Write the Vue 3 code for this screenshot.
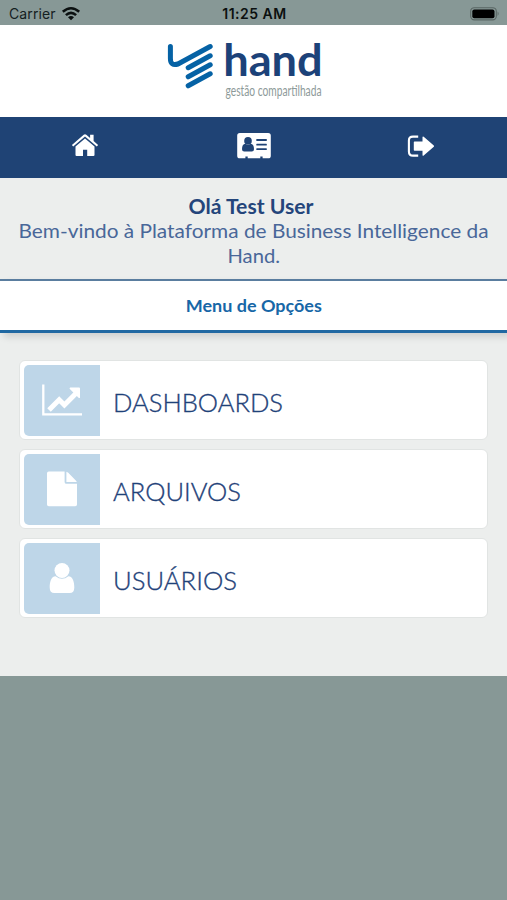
<script setup>
const user = 'Test User'

const options = [
  { id: 'dashboards', label: 'DASHBOARDS', width: 170 },
  { id: 'arquivos', label: 'ARQUIVOS', width: 128 },
  { id: 'usuarios', label: 'USUÁRIOS', width: 124 },
]
</script>

<template>
  <div class="screen">
    <!-- status bar -->
    <div class="status">
      <div class="carrier">
        <span>Carrier</span>
        <svg width="18" height="14" viewBox="0 0 18 14" fill="none" stroke="#0b1010" stroke-width="2.6">
          <path d="M.8 4.7Q9 -2.2 17.2 4.7" />
          <path d="M3.9 8.1Q9 3.5 14.1 8.1" />
          <path d="M9 13.2L6 10.2Q9 7.6 12 10.2Z" fill="#0b1010" stroke="none" />
        </svg>
      </div>
      <div class="clock">11:25 AM</div>
      <div class="battery">
        <svg width="30" height="14" viewBox="0 0 30 14">
          <rect x=".7" y=".7" width="25.6" height="12.2" rx="3.6" fill="none" stroke="#5a6664" stroke-width="1.1" />
          <rect x="2.3" y="2.5" width="22.2" height="8.8" rx="2" fill="#000" />
          <path d="M27.6 4.6Q29.6 6.8 27.6 9Z" fill="#5a6664" />
        </svg>
      </div>
    </div>

    <!-- logo -->
    <header class="header">
      <svg width="160" height="64" viewBox="0 0 160 64">
        <g fill="none" stroke="#0562a5" stroke-width="5" stroke-linecap="round" stroke-linejoin="round">
          <path d="M5.4 8.5V20.5Q5.4 28.4 13 26L45.2 8.5" />
          <path d="M23.2 29.7L45.2 17.8" />
          <path d="M23.2 38.8L45.2 26.8" />
          <path d="M23.2 47.8L45.2 35.8" />
        </g>
        <text class="brand" x="58.2" y="37.5" textLength="99.5" lengthAdjust="spacingAndGlyphs">hand</text>
        <text class="tagline" x="60.5" y="57.6" textLength="96" lengthAdjust="spacingAndGlyphs">gestão compartilhada</text>
      </svg>
    </header>

    <nav class="nav">
      <a class="nav-item">
        <svg width="28" height="26" viewBox="0 0 28 26" fill="#fff">
          <path d="M4.5 13.4L14 5.6L23.5 13.4V22Q23.5 23.1 22.4 23.1H16.2V16.8H12V23.1H5.6Q4.5 23.1 4.5 22Z" />
          <path d="M.9 11.9L12.7 1.7Q14 .7 15.3 1.7L19.1 4.9V1.7H22.6V7.9L27.1 11.9L25.8 13.4L14 3.5L2.2 13.4Z" />
        </svg>
      </a>
      <a class="nav-item">
        <svg width="34" height="28" viewBox="0 0 34 28">
          <path fill="#fff" d="M2.8 1H31.2Q33.8 1 33.8 3.6V23.7Q33.8 26.3 31.2 26.3H25.6V24.5H23.3V26.3H10.7V24.5H8.4V26.3H2.8Q.2 26.3 .2 23.7V3.6Q.2 1 2.8 1Z" />
          <g fill="#1f4375">
            <circle cx="11" cy="8.9" r="3.8" />
            <path d="M5 17.2Q5 12.3 8.3 11.8Q11 14 13.7 11.8Q17 12.3 17 17.2Q17 19.6 14.8 19.6H7.2Q5 19.6 5 17.2Z" />
            <rect x="19.3" y="7.1" width="10.5" height="1.8" rx=".5" />
            <rect x="19.3" y="11.8" width="10.5" height="1.8" rx=".5" />
            <rect x="19.3" y="16.2" width="10.5" height="1.8" rx=".5" />
          </g>
        </svg>
      </a>
      <a class="nav-item">
        <svg width="31" height="24" viewBox="0 0 31 24">
          <path d="M11.2 2.6H6Q1.9 2.6 1.9 6.6V17.4Q1.9 21.6 6 21.6H11.2" fill="none" stroke="#fff" stroke-width="2.1" />
          <path d="M7.5 7.6H15.5V3.2Q15.6 1.9 16.7 2.7L26.8 11.4Q27.4 12.1 26.8 12.8L16.7 21.6Q15.6 22.4 15.5 21.1V16.8H7.5Q6.8 16.8 6.8 16.1V8.3Q6.8 7.6 7.5 7.6Z" fill="#fff" />
        </svg>
      </a>
    </nav>

    <section class="welcome">
      <svg width="507" height="101" viewBox="0 0 507 101">
        <text class="hello" x="188.5" y="35.7" textLength="125" lengthAdjust="spacingAndGlyphs">Olá {{ user }}</text>
        <text class="message" x="18.5" y="60.1" textLength="470" lengthAdjust="spacingAndGlyphs">Bem-vindo à Plataforma de Business Intelligence da</text>
        <text class="message" x="227.5" y="84.5" textLength="52.5" lengthAdjust="spacingAndGlyphs">Hand.</text>
      </svg>
    </section>

    <div class="menu-title">
      <svg width="140" height="26" viewBox="0 0 140 26">
        <text x="1.7" y="18.5" textLength="136.2" lengthAdjust="spacingAndGlyphs">Menu de Opções</text>
      </svg>
    </div>

    <main class="options">
      <a v-for="option in options" :key="option.id" class="option">
        <div class="option-icon">
          <svg v-if="option.id === 'dashboards'" width="40" height="32" viewBox="0 0 40 32">
            <path d="M1.3 .5V30.3H40" fill="none" stroke="#fff" stroke-width="2.3" />
            <path d="M7 26L17.2 15.8L22.4 21L34.6 8.8" fill="none" stroke="#fff" stroke-width="5" />
            <path d="M28.2 3.4H37Q38 3.4 38 4.4V13.4Q37.6 14.6 36.6 13.8L27.8 5Q27 3.9 28.2 3.4Z" fill="#fff" />
          </svg>
          <svg v-else-if="option.id === 'arquivos'" width="30" height="36" viewBox="0 0 30 36" fill="#fff">
            <path d="M1.8 .5H17.6V10.9Q17.6 12.8 19.4 12.8H30V33.4Q30 35.2 28.2 35.2H1.8Q0 35.2 0 33.4V2.3Q0 .5 1.8 .5Z" />
            <path d="M19.4 .7Q20.4 1 21 1.6L28.8 9.4Q29.5 10.1 29.8 11H19.4Z" />
          </svg>
          <svg v-else width="26" height="30" viewBox="0 0 26 30" fill="#fff">
            <circle cx="13" cy="7.5" r="7.5" />
            <path d="M6.6 13.2Q13 18.4 19.4 13.2C24 13.5 25.3 19 25.3 24.5Q25.3 30 20.6 30H5.4Q.7 30 .7 24.5C.7 19 2 13.5 6.6 13.2Z" />
          </svg>
        </div>
        <svg class="option-label" width="200" height="40" viewBox="0 0 200 40">
          <text x="0" y="28" :textLength="option.width" lengthAdjust="spacingAndGlyphs">{{ option.label }}</text>
        </svg>
      </a>
    </main>
  </div>
</template>

<style>
body { margin: 0; background: #879896; }
</style>

<style scoped>
.screen {
  width: 507px; height: 900px; overflow: hidden;
  display: flex; flex-direction: column;
  background: #879896; font-family: Lato, "Open Sans", sans-serif;
}
svg { display: block; overflow: visible; }

.status {
  display: grid; grid-template-columns: 1fr auto 1fr; align-items: center;
  height: 25px; padding: 2px 7px 0 9px; box-sizing: border-box;
  font-family: Inter, sans-serif; font-size: 14px; color: #14201f;
}
.carrier { display: flex; align-items: center; gap: 6px; letter-spacing: .1px; }
.clock { font-weight: 600; letter-spacing: .5px; color: #0b1010; }
.battery { justify-self: end; }

.header {
  display: flex; justify-content: center; align-items: flex-start;
  height: 92px; padding: 13px 18px 0 0; box-sizing: border-box;
  background: #fff;
}
.brand { font-size: 43px; font-weight: 700; fill: #1c4279; }
.tagline { font-size: 14.5px; fill: #8d9a99; }

.nav {
  display: grid; grid-template-columns: repeat(3, 1fr);
  height: 61px; box-sizing: border-box; padding-bottom: 3px;
  background: #1f4375;
}
.nav-item { display: flex; align-items: center; justify-content: center; }

.welcome { height: 101px; background: #eceeed; }
.hello { font-size: 20px; font-weight: 700; fill: #24457b; }
.message { font-size: 20px; fill: #496799; }

.menu-title {
  display: flex; justify-content: center; align-items: center;
  height: 54px; box-sizing: border-box; background: #fff;
  border-top: 2px solid #5a7d9f; border-bottom: 3px solid #2068a2;
  box-shadow: 4px 4px 7px rgba(0, 0, 0, .13);
  position: relative;
  font-size: 17.5px; font-weight: 700; fill: #1767a7;
}

.options {
  display: flex; flex-direction: column; gap: 9px;
  height: 343px; padding: 27px 19px 0; box-sizing: border-box;
  background: #eceeed;
}
.option {
  display: flex; align-items: center; height: 80px; padding: 4px;
  box-sizing: border-box; background: #fff;
  border: 1px solid #e1e4e3; border-radius: 6px;
}
.option-icon {
  display: flex; align-items: center; justify-content: center;
  width: 76px; height: 71px; background: #bed6e8;
  border-radius: 5px 0 0 5px;
}
.option-label {
  margin: 8px 0 0 13px; font-size: 26px; font-weight: 300;
  fill: #1f4279; stroke: #1f4279; stroke-width: .35px;
}
</style>
